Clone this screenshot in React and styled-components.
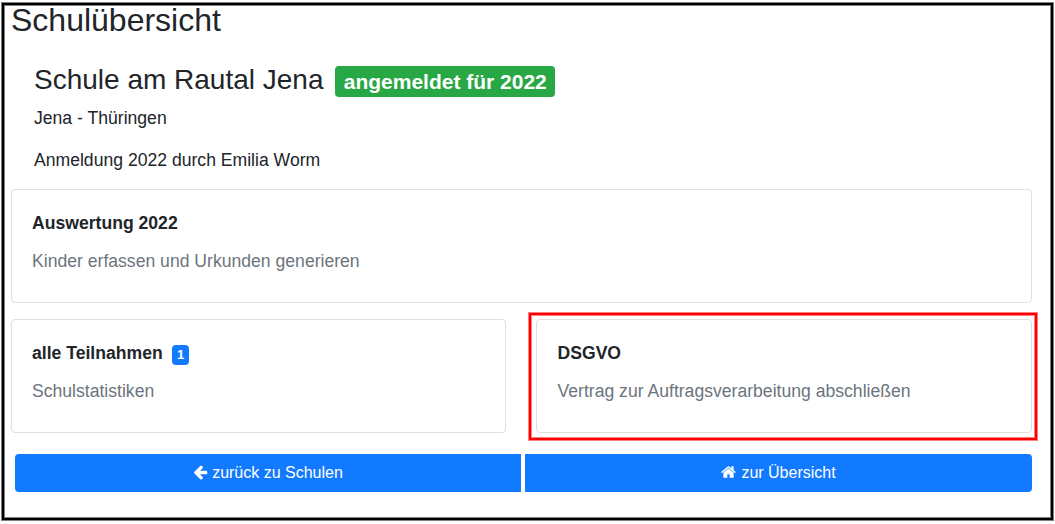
import React from "react";
import styled, { createGlobalStyle } from "styled-components";

const GlobalStyle = createGlobalStyle`
  *, *::before, *::after { box-sizing: border-box; }
  body {
    margin: 0;
    background: #fff;
    color: #212529;
    font-family: "Liberation Sans", Arial, sans-serif;
    font-size: 17.6px;
    line-height: 1.5;
  }
`;

const Page = styled.main`
  position: relative;
  height: 524px;
  padding: 1px 23px 0 11px;
  overflow: hidden;
`;

const PageFrame = styled.div`
  position: absolute;
  inset: 2px 1px 3px 1px;
  border: 1px solid #808080;
  box-shadow: inset 0 0 0 2px #000, inset 0 0 0 3px #808080;
  pointer-events: none;
`;

const PageTitle = styled.h1`
  margin: 0;
  font-size: 32px;
  font-weight: 400;
  line-height: 38px;
`;

const School = styled.section`
  padding: 24px 0 0 23px;
`;

const SchoolName = styled.h2`
  display: flex;
  align-items: baseline;
  gap: 11.4px;
  margin: 0;
  height: 34px;
  font-size: 28px;
  font-weight: 400;
  line-height: 34px;
`;

const StatusBadge = styled.span`
  padding: 5px 8.2px 5px 8.8px;
  border-radius: 4px;
  background: #28a745;
  color: #fff;
  font-size: 21px;
  font-weight: 700;
  line-height: 21px;
  white-space: nowrap;
`;

const SchoolText = styled.p`
  margin: 0 0 16px;
  line-height: 26px;
  &:first-of-type { margin-top: 8px; }
`;

const Cards = styled.div`
  display: grid;
  grid-template-columns: 495px 496px;
  column-gap: 30px;
  row-gap: 16px;
`;

const Card = styled.article`
  position: relative;
  grid-column: ${(p) => (p.$wide ? "1 / -1" : "auto")};
  height: 114px;
  padding: 20px;
  padding-left: ${(p) => (p.$marked ? "20.5px" : "20px")};
  border: 1px solid rgba(0, 0, 0, 0.125);
  border-radius: 4px;
`;

const CardTitle = styled.h3`
  display: flex;
  align-items: baseline;
  gap: 9.3px;
  height: 26px;
  margin: 0 0 12px;
  font-size: 17.6px;
  font-weight: 700;
  line-height: 26px;
`;

const CountBadge = styled.span`
  padding: 3px 5px;
  border-radius: 4px;
  background: #127aff;
  color: #fff;
  font-size: 13.2px;
  line-height: 14px;
`;

const CardText = styled.p`
  margin: 0;
  color: #6c757d;
  line-height: 26px;
`;

const Highlight = styled.div`
  position: absolute;
  inset: -8px -7px -9px -9px;
  border: 1px solid #ff8080;
  box-shadow: inset 0 0 0 2px #f00, inset 0 0 0 3px #ff8080;
  pointer-events: none;
`;

const ButtonGroup = styled.nav`
  display: grid;
  grid-template-columns: 506px 507px;
  gap: 4px;
  margin: 21px 0 0 4px;
`;

const Button = styled.button`
  display: flex;
  align-items: center;
  justify-content: center;
  gap: ${(p) => (p.$last ? "5px" : "4px")};
  height: 38px;
  padding: 0;
  border: 0;
  border-radius: ${(p) => (p.$last ? "0 4px 4px 0" : "4px 0 0 4px")};
  background: #127aff;
  color: #fff;
  font: 16px/24px "Liberation Sans", Arial, sans-serif;
`;

const Icon = styled.svg`
  width: 15px;
  height: 16px;
  margin-bottom: 2px;
  fill: currentColor;
`;

export default function App() {
  return (
    <Page>
      <GlobalStyle />
      <PageTitle>Schulübersicht</PageTitle>
      <School>
        <SchoolName>
          Schule am Rautal Jena <StatusBadge>angemeldet für 2022</StatusBadge>
        </SchoolName>
        <SchoolText>Jena - Thüringen</SchoolText>
        <SchoolText>Anmeldung 2022 durch Emilia Worm</SchoolText>
      </School>
      <Cards>
        <Card $wide>
          <CardTitle>Auswertung 2022</CardTitle>
          <CardText>Kinder erfassen und Urkunden generieren</CardText>
        </Card>
        <Card>
          <CardTitle>
            alle Teilnahmen <CountBadge>1</CountBadge>
          </CardTitle>
          <CardText>Schulstatistiken</CardText>
        </Card>
        <Card $marked>
          <CardTitle>DSGVO</CardTitle>
          <CardText>Vertrag zur Auftragsverarbeitung abschließen</CardText>
          <Highlight />
        </Card>
      </Cards>
      <ButtonGroup>
        <Button>
          <Icon viewBox="64 0 1680 1792" aria-hidden="true">
            <path d="M1664 896v128q0 53-32.5 90.5t-84.5 37.5h-704l293 294q38 36 38 90t-38 90l-75 76q-37 37-90 37-52 0-91-37l-651-652q-37-37-37-90 0-52 37-91l651-650q38-38 91-38 52 0 90 38l75 74q38 38 38 91t-38 91l-293 293h704q52 0 84.5 37.5t32.5 90.5z" />
          </Icon>
          zurück zu Schulen
        </Button>
        <Button $last>
          <Icon viewBox="56 0 1680 1792" aria-hidden="true">
            <path d="M1472 992v480q0 26-19 45t-45 19h-384v-384h-256v384h-384q-26 0-45-19t-19-45v-480q0-1 .5-3t.5-3l575-474 575 474q1 2 1 6zm223-69l-62 74q-8 9-21 11h-3q-13 0-21-7l-692-577-692 577q-12 8-24 7-13-2-21-11l-62-74q-8-10-7-23.5t11-21.5l719-599q32-26 76-26t76 26l244 204v-195q0-14 9-23t23-9h192q14 0 23 9t9 23v408l219 182q10 8 11 21.5t-7 23.5z" />
          </Icon>
          zur Übersicht
        </Button>
      </ButtonGroup>
      <PageFrame />
    </Page>
  );
}
